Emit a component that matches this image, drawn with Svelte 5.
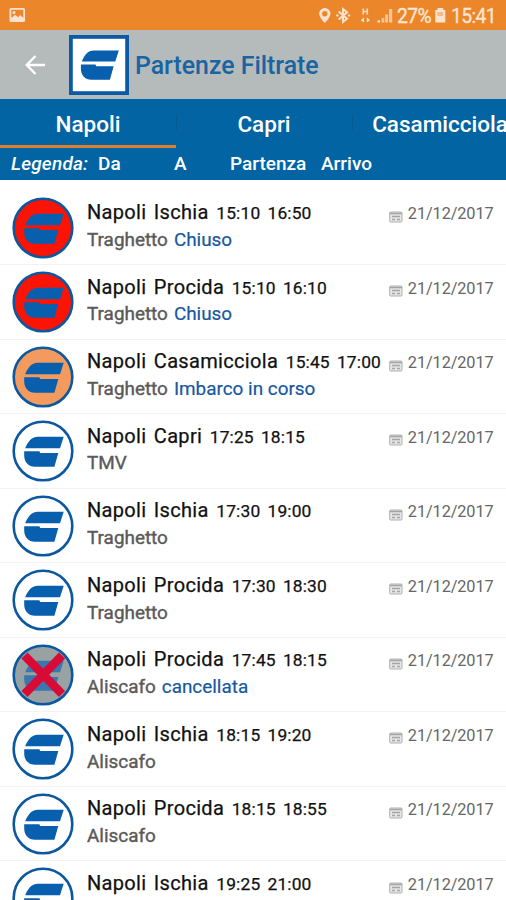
<script>
  const rows = [
    ['Napoli Ischia', '15:10', '16:50', 'Traghetto', 'Chiuso', 'closed'],
    ['Napoli Procida', '15:10', '16:10', 'Traghetto', 'Chiuso', 'closed'],
    ['Napoli Casamicciola', '15:45', '17:00', 'Traghetto', 'Imbarco in corso', 'boarding'],
    ['Napoli Capri', '17:25', '18:15', 'TMV', '', 'regular'],
    ['Napoli Ischia', '17:30', '19:00', 'Traghetto', '', 'regular'],
    ['Napoli Procida', '17:30', '18:30', 'Traghetto', '', 'regular'],
    ['Napoli Procida', '17:45', '18:15', 'Aliscafo', 'cancellata', 'cancelled'],
    ['Napoli Ischia', '18:15', '19:20', 'Aliscafo', '', 'regular'],
    ['Napoli Procida', '18:15', '18:55', 'Aliscafo', '', 'regular'],
    ['Napoli Ischia', '19:25', '21:00', 'Aliscafo', '', 'regular']
  ].map(([route, dep, arr, vessel, note, state]) => ({ route, dep, arr, vessel, note, state }));
  const fills = { closed: '#fb1404', boarding: '#f39a5e', regular: '#ffffff', cancelled: '#98a2a3' };
</script>

{#snippet mark()}
  <path d="M13.2 29.2C15 24.5 18 19.8 22 18.4Q23.6 17.8 25.5 17.8H51.7L48 29.2Z" />
  <path d="M12.2 32.2H27.3L28.3 34H46.3L42.4 47.8H23C16.5 47.8 12.2 43 12.2 36.5Z" />
{/snippet}

<div class="screen">
  <div class="status">
    <svg width="506" height="30" viewBox="0 0 506 30" fill="#fde3cf">
      <path fill-rule="evenodd" d="M11 8H23.5Q25 8 25 9.5V20.5Q25 22 23.5 22H11Q9.5 22 9.5 20.5V9.5Q9.5 8 11 8ZM11.3 9.8V18L15 14.8L18.3 17.3L20 15L23.3 18V9.8ZM14 11A1.5 1.5 0 1 1 14 14A1.5 1.5 0 0 1 14 11Z" />
      <path fill-rule="evenodd" d="M324.8 8A5.7 5.7 0 0 1 330.5 13.7C330.5 17 324.8 23 324.8 23S319.1 17 319.1 13.7A5.7 5.7 0 0 1 324.8 8ZM324.8 11A2.7 2.7 0 1 0 324.8 16.4A2.7 2.7 0 0 0 324.8 11Z" />
      <path class="bluetooth" d="M338.7 11.5L347 18.8L343 22V9L347 12.2L338.7 19.5" />
      <circle cx="337.4" cy="15.4" r="1.2" /><circle cx="349" cy="15.4" r="1.2" />
      <path class="network" d="M363.3 8.5V14.5M367.3 8.5V14.5M363.3 11.5H367.3" />
      <path d="M360.8 20.3L364 17.3V22.6ZM370 20.3L366.8 17.3V22.6Z" />
      <path d="M377.5 22.5V20.3H380V22.5Z" />
      <path d="M381.5 18H384.3V22.5H381.5ZM385.2 14.5H388V22.5H385.2ZM389 9H392.2V22.5H389Z" fill="#f8c69d" />
      <path d="M437.5 8H443.2V10H445.3V22.5H435.3V10H437.5Z" />
      <path d="M437.3 12H443.2V16H437.3Z" fill="#f5bc8b" />
    </svg>
    <span class="percent">27%</span>
    <span class="clock">15:41</span>
  </div>
  <header>
    <svg class="back" width="20" height="20" viewBox="0 0 20 20" fill="none" stroke="#fff" stroke-width="2.3"><path d="M20 10H2M10.5 1L1.7 10L10.5 19" /></svg>
    <svg class="logo" width="60" height="60" viewBox="0 0 60 60">
      <rect x="1.9" y="1.9" width="56.2" height="56.2" fill="#fff" stroke="#0b5aa5" stroke-width="3.8" />
      <g fill="#075fae" transform="translate(.2 -2) scale(.96 .98)">{@render mark()}</g>
    </svg>
    <h1>Partenze Filtrate</h1>
  </header>
  <nav>
    <div class="tab active"><span>Napoli</span></div>
    <div class="tab"><span>Capri</span></div>
    <div class="tab"><span>Casamicciola</span></div>
  </nav>
  <div class="legend">
    <em>Legenda:</em><span class="da">Da</span><span class="a">A</span><span class="dep">Partenza</span><span>Arrivo</span>
  </div>
  <main>
    {#each rows as row}
      <article>
        <svg class="badge" width="62" height="62" viewBox="0 0 62 62">
          <circle cx="31" cy="31" r="29.3" fill={fills[row.state]} stroke="#0b58a0" stroke-width="2.6" />
          <g fill={row.state === 'cancelled' ? '#3977ae' : '#075fae'} transform="translate(0 -1)">{@render mark()}</g>
          {#if row.state === 'cancelled'}
            <path d="M12.5 11.5L50 50M50 11.5L12.5 50" stroke="#d70b35" stroke-width="8.5" />
          {/if}
        </svg>
        <div class="details">
          <div class="top">
            <span class="route">{row.route}</span>
            <span class="times">{row.dep} {row.arr}</span>
            <span class="date">
              <svg width="14" height="12" viewBox="0 0 14 12"><rect x=".7" y="1" width="12.3" height="10" rx="1" fill="#e6e6e6" stroke="#b0b0b0" /><path d="M1 2.5H13M3 5.5H11M3 8.5H6M8 8.5H11" stroke="#a5a5a5" stroke-width="1.3" /></svg>
              <span>21/12/2017</span>
            </span>
          </div>
          <div class="bottom"><span class="vessel">{row.vessel}</span><span class="note">{row.note}</span></div>
        </div>
      </article>
    {/each}
  </main>
</div>

<style>
  .screen { width: 506px; height: 900px; overflow: hidden; background: #fff; font-family: Roboto, sans-serif; display: flex; flex-direction: column; white-space: nowrap; }
  .status { height: 30px; flex: none; background: #ec862b; display: grid; color: #fde6d5; font-size: 19.3px; line-height: 33px; }
  .status > * { grid-area: 1 / 1; }
  .status span { -webkit-text-stroke: .3px #fde6d5; letter-spacing: -.6px; }
  .bluetooth { fill: none; stroke: #fde3cf; stroke-width: 2; }
  .network { fill: none; stroke: #fbd9bf; stroke-width: 1.6; }
  .percent { margin-left: 397px; }
  .clock { margin-left: 451px; }
  header { height: 69px; flex: none; box-sizing: border-box; background: #b5bbba; display: flex; align-items: center; padding: 0 0 0 25px; }
  .logo { margin-left: 24px; }
  h1 { margin: 3px 0 0 6px; font-size: 24.85px; line-height: 30px; font-weight: 500; color: #1964a2; }
  nav { height: 49px; flex: none; background: #0264a2; display: flex; }
  .tab { width: 176px; flex: none; box-sizing: border-box; border-bottom: 3px solid transparent; display: flex; justify-content: center; color: #fff; font-size: 22.5px; line-height: 51px; font-weight: 500; }
  .tab.active { border-color: #da7f30; }
  .tab + .tab { background: linear-gradient(#075990, #075990) 0 50% / 1px 16px no-repeat; }
  .legend { height: 31.5px; flex: none; background: #0264a2; color: #fff; font-size: 19px; line-height: 32px; font-weight: 500; display: flex; padding-left: 11px; }
  .legend em { width: 87px; letter-spacing: .2px; }
  .da { width: 76px; }
  .a { width: 56px; }
  .dep { width: 91px; }
  main { padding-top: 11px; }
  article { height: 74.55px; box-sizing: border-box; border-bottom: 1.5px solid #f3f3f3; display: flex; padding-left: 12px; }
  .badge { margin-top: 6px; flex: none; }
  .details { flex: 1; margin-left: 13px; padding-right: 12.5px; }
  .top { display: flex; align-items: baseline; height: 24px; line-height: 24px; margin-top: 9.6px; }
  .route { font-size: 20px; letter-spacing: .33px; word-spacing: 2px; color: #111; -webkit-text-stroke: .25px #111; }
  .times { margin-left: 7.5px; font-size: 17.4px; letter-spacing: .15px; word-spacing: 2.7px; color: #111; -webkit-text-stroke: .25px #111; }
  .date { margin-left: auto; display: flex; align-items: center; gap: 5px; font-size: 16.3px; letter-spacing: -.1px; color: #666; margin-top: 3px; align-self: flex-start; line-height: 22px; }
  .date svg { margin-top: 5px; }
  .bottom { display: flex; line-height: 26px; margin-top: 2.7px; font-size: 18.9px; gap: 6px; color: #5a5a5a; }
  .vessel { -webkit-text-stroke: .4px #5a5a5a; }
  .note { color: #1658a0; -webkit-text-stroke: .2px #1658a0; }
</style>
